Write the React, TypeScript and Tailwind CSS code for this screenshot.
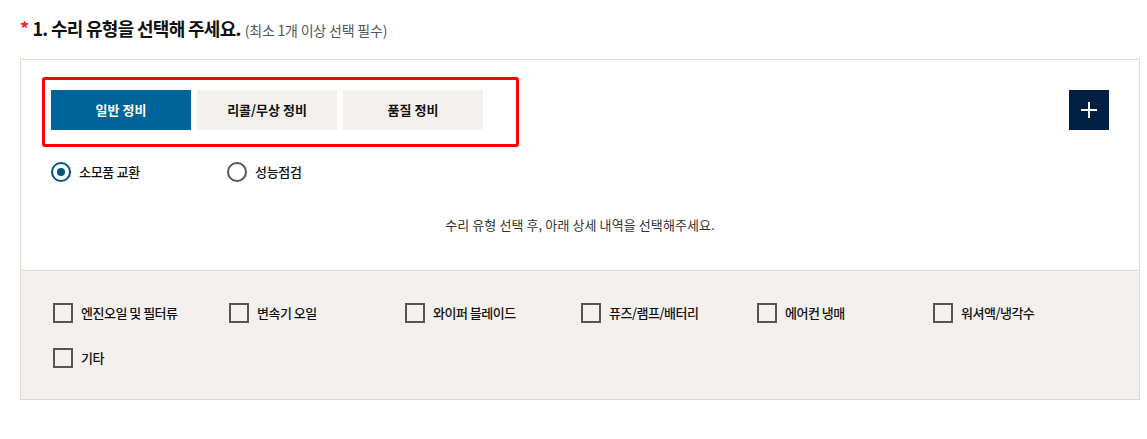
import { useState } from 'react';

const tabs = ['일반 정비', '리콜/무상 정비', '품질 정비'];
const radios = ['소모품 교환', '성능점검'];
const items = ['엔진오일 및 필터류', '변속기 오일', '와이퍼 블레이드', '퓨즈/램프/배터리', '에어컨 냉매', '워셔액/냉각수', '기타'];

export default function App() {
  const [tab, setTab] = useState(0);
  const [radio, setRadio] = useState(0);
  const [checked, setChecked] = useState<string[]>([]);

  const toggle = (name: string) =>
    setChecked((prev) => (prev.includes(name) ? prev.filter((v) => v !== name) : [...prev, name]));

  return (
    <div className="min-h-screen bg-white pl-5 pr-[7px] pt-4 text-[#111] font-['Noto_Sans_CJK_KR','Noto_Sans',sans-serif]">
      <h2 className="flex items-baseline gap-1 text-[18px] font-bold tracking-[-0.7px] leading-[24px]">
        <span className="text-[#e8281e]">*</span>
        <span>1. 수리 유형을 선택해 주세요.</span>
        <span className="text-[14px] font-normal text-[#555] tracking-[-0.2px]">(최소 1개 이상 선택 필수)</span>
      </h2>

      <div className="mt-[17px] border border-[#e0d8cf]">
        <div className="relative bg-white px-[30px] pt-[30px] pb-[35px]">
          <div className="flex items-start justify-between">
            <div className="flex gap-[6px]">
              {tabs.map((t, i) => (
                <button
                  key={t}
                  type="button"
                  onClick={() => setTab(i)}
                  className={
                    i === tab
                      ? 'w-[140px] h-10 bg-[#00649a] text-white text-[13px] font-bold'
                      : 'w-[140px] h-10 bg-[#f4f0ed] text-[#111] text-[13px] font-bold'
                  }
                >
                  {t}
                </button>
              ))}
            </div>
            <button type="button" className="w-10 h-10 bg-[#011f42] flex items-center justify-center">
              <svg width="16" height="16" viewBox="0 0 16 16">
                <rect x="7" y="0" width="2" height="16" fill="#fff" />
                <rect x="0" y="7" width="16" height="2" fill="#fff" />
              </svg>
            </button>
          </div>

          <div className="absolute left-[21px] top-[17px] w-[477px] h-[70px] border-[3px] border-[#ff0000] rounded-[3px] pointer-events-none" />

          <div className="mt-8 flex">
            {radios.map((r, i) => (
              <label key={r} onClick={() => setRadio(i)} className="w-[176px] flex items-center gap-2 cursor-pointer">
                <span
                  className={
                    i === radio
                      ? 'w-5 h-5 rounded-full border-2 border-[#00557f] flex items-center justify-center'
                      : 'w-5 h-5 rounded-full border-2 border-[#555] flex items-center justify-center'
                  }
                >
                  {i === radio && <span className="w-2 h-2 rounded-full bg-[#00557f]" />}
                </span>
                <span className="text-[13px] font-medium tracking-[-0.3px]">{r}</span>
              </label>
            ))}
          </div>

          <p className="mt-[33px] text-center text-[13px] text-[#333] tracking-[0.1px]">
            수리 유형 선택 후, 아래 상세 내역을 선택해주세요.
          </p>
        </div>

        <div className="border-t border-[#e0d8cf] bg-[#f4f0ed] pl-[32px] pr-[30px] pt-[32px] pb-[31px] grid grid-cols-6 gap-y-[25px]">
          {items.map((name) => (
            <label key={name} onClick={() => toggle(name)} className="flex items-center gap-2 cursor-pointer">
              <span className="w-5 h-5 border-2 border-[#555] flex items-center justify-center">
                {checked.includes(name) && <span className="w-2.5 h-2.5 bg-[#00649a]" />}
              </span>
              <span className="text-[13px] font-medium tracking-[-0.5px]">{name}</span>
            </label>
          ))}
        </div>
      </div>
    </div>
  );
}
